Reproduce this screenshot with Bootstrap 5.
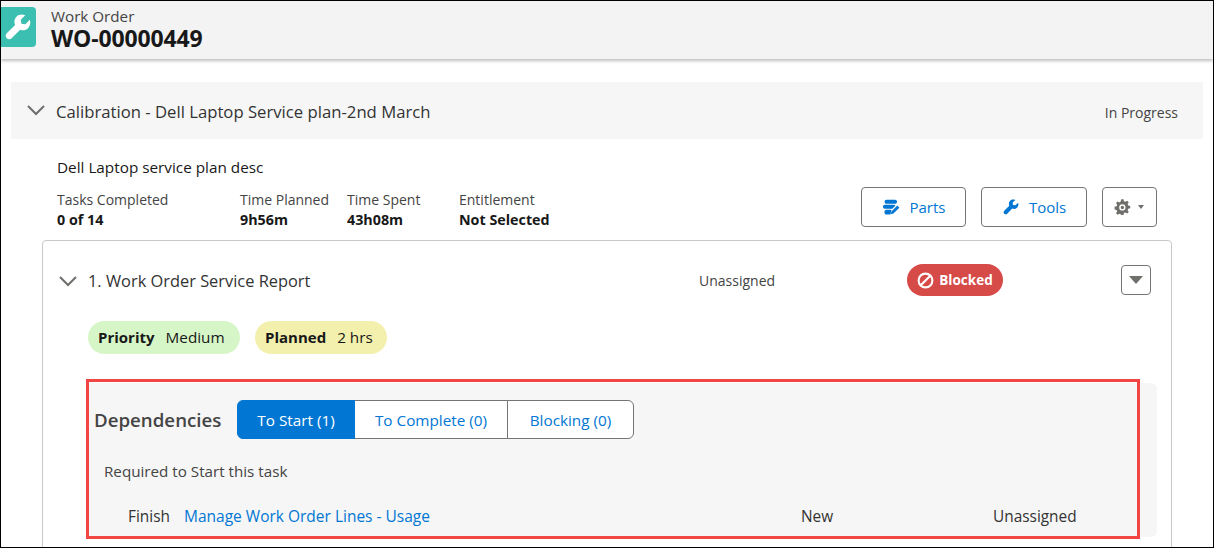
<!DOCTYPE html>
<html lang="en">
<head>
<meta charset="UTF-8">
<meta name="viewport" content="width=device-width, initial-scale=1.0">
<title>Work Order</title>
<link rel="stylesheet" href="https://cdn.jsdelivr.net/npm/bootstrap@5.3.0/dist/css/bootstrap.min.css">
<style>
html, body { height: 100%; overflow: hidden; }
body { font-family: "Open Sans", "Noto Sans", sans-serif; font-size: 14px; color: #181818; background: #fff; }
.frame { position: relative; height: 548px; border: 1px solid #000; overflow: hidden; }
.wo-header { height: 58px; background: #f3f3f3; box-shadow: 0 2px 3px rgba(0,0,0,.25); padding-top: 6px; }
.wo-icon { width: 35px; height: 40px; background: #3bbfb0; border-radius: 0 4px 4px 0; }
.wo-icon svg { width: 30px; height: 30px; fill: #fff; margin-left: -1px; }
.wo-text { margin-left: 15px; }
.wo-type { font-size: 15.2px; line-height: 18px; color: #444; }
.wo-num { font-size: 23px; line-height: 26px; font-weight: 700; color: #181818; letter-spacing: -.15px; }
.plan-bar { height: 57px; margin: 23px 10px 0 10px; background: #f6f6f6; padding: 0 25px 0 16px; }
.chev { width: 18px; height: 11px; fill: none; stroke: #706e6b; stroke-width: 2; }
.plan-title { font-size: 16.7px; margin-left: 11px; color: #333; padding-top: 3px; }
.plan-state { font-size: 14px; color: #444; padding-top: 3px; }
.plan-desc { margin: 18px 0 0 56px; line-height: 20px; font-size: 15.3px; }
.stats-row { margin: 0 0 0 56px; height: 63px; }
.stat { line-height: 20px; margin-top: 13px; }
.stat-a { width: 183px; }
.stat-b { width: 107px; }
.stat-c { width: 112px; }
.stat-label { font-size: 14px; color: #444; }
.stat-val { font-size: 14.3px; font-weight: 700; color: #181818; }
.act-btns { margin-left: auto; margin-right: 56px; margin-top: 10px; gap: 15px; }
.act-btn { height: 40px; background: #fff; border: 1px solid #747474; border-radius: 4px; color: #0176d3; font-size: 15px; padding: 0; }
.act-btn:hover { background: #fff; color: #0176d3; border-color: #747474; }
.btn-parts { width: 105px; }
.btn-tools { width: 106px; }
.btn-gear { width: 55px; }
.act-btn svg { fill: #0176d3; width: 18px; height: 18px; margin-right: 9px; }
.btn-parts svg { margin-right: 10px; }
.btn-gear svg.gear { fill: #706e6b; width: 18px; height: 18px; margin-right: 7px; margin-left: -2px; }
.caret-mini { width: 0; height: 0; border-left: 3.5px solid transparent; border-right: 3.5px solid transparent; border-top: 4px solid #706e6b; }
.task-card { margin: 0 41px 0 41px; height: 400px; border: 1px solid #c9c9c9; border-radius: 4px; padding: 0; }
.task-head { height: 80px; padding: 0 20px 0 16px; }
.task-title { font-size: 16.4px; margin-left: 11px; width: 611px; color: #333; }
.task-owner { font-size: 14px; color: #444; width: 208px; padding-bottom: 2px; }
.blocked-pill { width: 96px; height: 32px; margin-top: -2px; background: #d64a48; color: #fff; font-weight: 700; font-size: 13.5px; border-radius: 16px; }
.blocked-pill svg { width: 17px; height: 17px; margin-right: 5px; fill: none; stroke: #fff; stroke-width: 2; }
.menu-btn { width: 30px; height: 30px; margin-top: -2px; border: 1px solid #747474; border-radius: 4px; background: #fff; margin-left: auto; padding: 0; }
.menu-caret { width: 0; height: 0; border-left: 7.5px solid transparent; border-right: 7.5px solid transparent; border-top: 8px solid #706e6b; }
.chip-row { margin-left: 45px; gap: 15px; }
.chip { height: 33px; border-radius: 17px; padding: 0 10px; font-size: 15px; color: #181818; white-space: nowrap; }
.chip b { margin-right: 11px; font-weight: 700; }
.chip-green { width: 152px; background: #d6f6c8; }
.chip-yellow { width: 132px; background: #f3efac; }
.chip-val { font-size: 15.3px; }
.dep-panel { margin: 29px 14px 0 44px; height: 154px; background: #f6f6f6; border-radius: 6px; }
.dep-top { padding: 17px 0 0 7px; }
.dep-title { font-size: 18.7px; font-weight: 600; color: #444; width: 143px; padding-top: 2px; }
.dep-tabs .btn { height: 39px; font-size: 15.3px; background: #fff; color: #0176d3; border-color: #747474; padding: 2px 0 0; }
.dep-tabs .btn.active { background: #0176d3; color: #fff; border-color: #0176d3; }
.tab-a { width: 118px; }
.tab-b { width: 154px; }
.tab-c { width: 127px; }
.dep-sub { margin: 22px 0 0 17px; font-size: 15.2px; line-height: 20px; color: #444; }
.dep-row { margin: 26px 0 0 41px; font-size: 15.4px; line-height: 20px; }
.dep-kind { width: 56px; color: #333; }
.dep-link { width: 617px; color: #0176d3; text-decoration: none; font-size: 15.5px; margin-top: -1px; }
.dep-status { width: 192px; color: #333; }
.dep-owner { color: #333; }
.red-box { position: absolute; left: 85px; top: 378px; width: 1054px; height: 160px; border: 3px solid #f44545; pointer-events: none; }
</style>
</head>
<body>
<div class="frame">
    <div class="wo-header d-flex align-items-start">
        <div class="wo-icon d-flex align-items-center justify-content-center">
            <svg viewBox="0 0 24 24"><path d="M21.5 6.2l-3.6 3.6-3.2-.5-.5-3.2 3.600-3.600C15.200 1.600 12.300 2 10.600 3.900 9 5.700 8.700 8.200 9.700 10.300L3 17c-1.100 1.100-1.100 2.800 0 3.900s2.800 1.100 3.900 0l6.800-6.800c2.100.9 4.600.5 6.300-1.200 1.800-1.800 2.300-4.500 1.500-6.700z"/></svg>
        </div>
        <div class="wo-text">
            <div class="wo-type">Work Order</div>
            <div class="wo-num">WO-00000449</div>
        </div>
    </div>

    <div class="plan-bar d-flex align-items-center">
        <svg class="chev" viewBox="0 0 18 11"><path d="M1 1l8 8 8-8"/></svg>
        <span class="plan-title">Calibration - Dell Laptop Service plan-2nd March</span>
        <span class="plan-state ms-auto">In Progress</span>
    </div>

    <div class="plan-desc">Dell Laptop service plan desc</div>

    <div class="stats-row d-flex align-items-start">
        <div class="stat stat-a"><div class="stat-label">Tasks Completed</div><div class="stat-val">0 of 14</div></div>
        <div class="stat stat-b"><div class="stat-label">Time Planned</div><div class="stat-val">9h56m</div></div>
        <div class="stat stat-c"><div class="stat-label">Time Spent</div><div class="stat-val">43h08m</div></div>
        <div class="stat"><div class="stat-label">Entitlement</div><div class="stat-val">Not Selected</div></div>
        <div class="act-btns d-flex">
            <button class="btn act-btn btn-parts d-flex align-items-center justify-content-center">
                <svg viewBox="0 0 20 20"><path d="M5 2h9.500c1.200 0 2.200 1 2.200 2.200s-1 2.300-2.200 2.300H5C3.800 6.500 2.800 5.400 2.800 4.200S3.800 2 5 2zM3.200 7.500H13c.8 0 1.500.3 2 .8l-3.500 3.700H3.200C2 12 1 11 1 9.800s1-2.300 2.200-2.300zM5 13h5.600l-1.100 4.500-.2.800H5c-1.300 0-2.300-1.200-2.300-2.600S3.700 13 5 13zM17 8.400l2.300 2.300-6.600 6.600-3 .8.800-3z"/></svg>
                Parts
            </button>
            <button class="btn act-btn btn-tools d-flex align-items-center justify-content-center">
                <svg viewBox="0 0 24 24"><path d="M21.500 6.200l-3.600 3.600-3.200-.5-.5-3.200 3.600-3.600C15.200 1.600 12.300 2 10.600 3.900 9 5.700 8.700 8.200 9.700 10.300L3 17c-1.100 1.100-1.100 2.800 0 3.900s2.800 1.100 3.900 0l6.800-6.800c2.100.9 4.600.5 6.300-1.200 1.800-1.800 2.300-4.500 1.500-6.700z"/></svg>
                Tools
            </button>
            <button class="btn act-btn btn-gear d-flex align-items-center justify-content-center">
                <svg class="gear" viewBox="0 0 16 16"><path d="M9.400 1l.3 1.800 1.300.6 1.600-1 1.400 1.500-1 1.500.5 1.300 1.800.4v2.100l-1.800.3-.5 1.300 1 1.600-1.400 1.400-1.600-1-1.300.5-.3 1.800H7.300L7 14.400l-1.300-.5-1.600 1-1.400-1.400 1-1.600-.5-1.300-1.800-.3V7.700l1.800-.4.5-1.300-1-1.500 1.400-1.500 1.600 1L7 2.800 7.300 1zM8.300 5.600a2.800 2.800 0 1 0 0 5.600 2.800 2.800 0 0 0 0-5.600zm0 1.300a1.500 1.500 0 1 1 0 3 1.500 1.500 0 0 1 0-3z" fill-rule="evenodd"/></svg>
                <span class="caret-mini"></span>
            </button>
        </div>
    </div>

    <div class="task-card">
        <div class="task-head d-flex align-items-center">
            <svg class="chev" viewBox="0 0 18 11"><path d="M1 1l8 8 8-8"/></svg>
            <span class="task-title">1. Work Order Service Report</span>
            <span class="task-owner">Unassigned</span>
            <span class="blocked-pill d-flex align-items-center justify-content-center">
                <svg viewBox="0 0 16 16"><circle cx="8" cy="8" r="6.500"/><path d="M3.500 12.500l9-9"/></svg>Blocked
            </span>
            <button class="menu-btn d-flex align-items-center justify-content-center"><span class="menu-caret"></span></button>
        </div>
        <div class="chip-row d-flex">
            <div class="chip chip-green d-flex align-items-center"><b>Priority</b> <span class="chip-val">Medium</span></div>
            <div class="chip chip-yellow d-flex align-items-center"><b>Planned</b> <span class="chip-val">2 hrs</span></div>
        </div>
        <div class="dep-panel">
            <div class="dep-top d-flex align-items-center">
                <div class="dep-title">Dependencies</div>
                <div class="btn-group dep-tabs">
                    <button class="btn tab-a active">To Start (1)</button>
                    <button class="btn tab-b">To Complete (0)</button>
                    <button class="btn tab-c">Blocking (0)</button>
                </div>
            </div>
            <div class="dep-sub">Required to Start this task</div>
            <div class="dep-row d-flex">
                <span class="dep-kind">Finish</span>
                <a class="dep-link" href="#">Manage Work Order Lines - Usage</a>
                <span class="dep-status">New</span>
                <span class="dep-owner">Unassigned</span>
            </div>
        </div>
    </div>

    <div class="red-box"></div>
</div>
<script src="https://cdn.jsdelivr.net/npm/bootstrap@5.3.0/dist/js/bootstrap.bundle.min.js"></script>
</body>
</html>
